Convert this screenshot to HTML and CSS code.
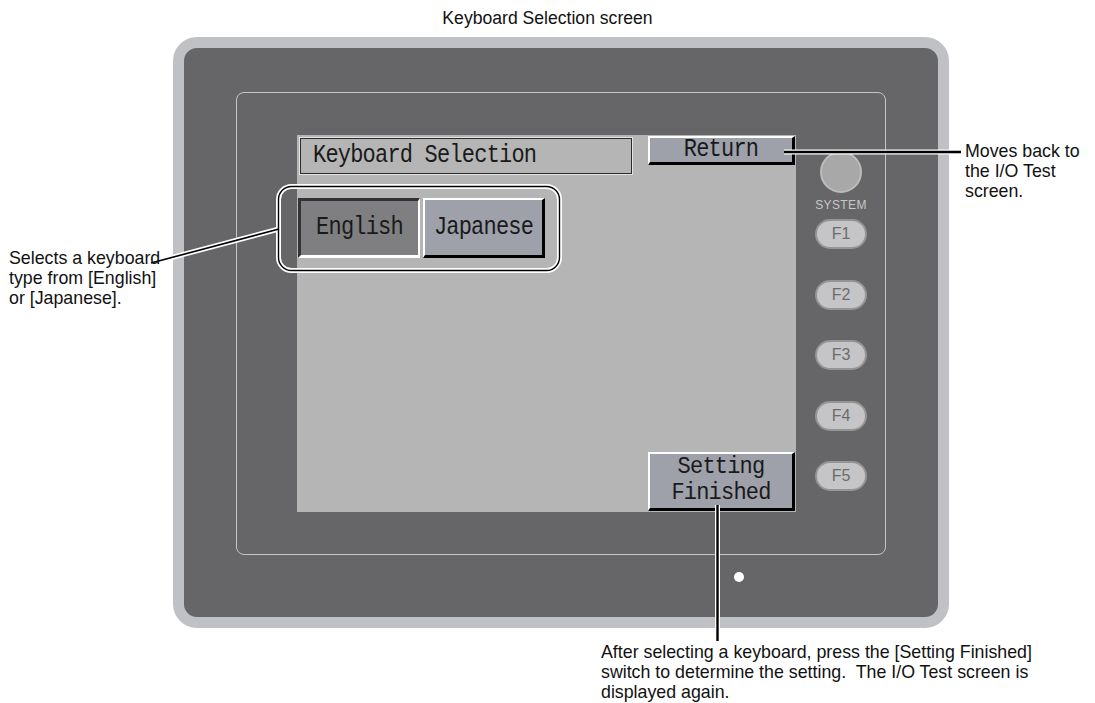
FILE: index.html
```html
<!DOCTYPE html>
<html lang="en">
<head>
    <meta charset="UTF-8">
    <title>Keyboard Selection screen</title>

    <link rel="stylesheet" href="styles.css">
</head>

<body>
<div class="page">
    <h1 class="caption">Keyboard Selection screen</h1>

    <div class="panel">
        <div class="bezel">
            <div class="screen">
                <div class="screen-top">
                    <div class="title-box lcd"><span>Keyboard Selection</span></div>
                    <div class="key raised lcd"><span>Return</span></div>
                </div>

                <div class="choice-row">
                    <div class="key choice pressed lcd"><span>English</span></div>
                    <div class="key choice raised lcd"><span>Japanese</span></div>
                </div>

                <div class="key finish raised lcd">
                    <span>Setting</span>
                    <span>Finished</span>
                </div>
            </div>

            <div class="side-keys">
                <div class="sys-btn"></div>
                <div class="sys-label">SYSTEM</div>
                <div class="fkey">F1</div>
                <div class="fkey">F2</div>
                <div class="fkey">F3</div>
                <div class="fkey">F4</div>
                <div class="fkey">F5</div>
            </div>
        </div>
        <div class="lamp"></div>
    </div>

    <svg class="leaders" width="1095" height="703" viewBox="0 0 1095 703">
        <g fill="none" stroke="#ffffff" stroke-width="5">
            <rect x="278.5" y="186.5" width="281" height="84" rx="13"/>
            <line x1="151" y1="263" x2="279" y2="229"/>
            <line x1="784" y1="152" x2="960" y2="152"/>
            <line x1="717.5" y1="505" x2="717.5" y2="641"/>
        </g>
        <g fill="none" stroke="#000000" stroke-width="2">
            <rect x="278.5" y="186.5" width="281" height="84" rx="13" stroke-width="1.4"/>
            <line x1="151" y1="263" x2="279" y2="229" stroke-width="1.6"/>
            <line x1="784" y1="152" x2="961" y2="152" stroke-width="2.4"/>
            <line x1="717.5" y1="505" x2="717.5" y2="641" stroke-width="2.4"/>
        </g>
    </svg>

    <div class="note note-left">Selects a keyboard<br>type from [English]<br>or [Japanese].</div>
    <div class="note note-right">Moves back to<br>the I/O Test<br>screen.</div>
    <div class="note note-bottom">After selecting a keyboard, press the [Setting Finished]<br>switch to determine the setting.&nbsp; The I/O Test screen is<br>displayed again.</div>
</div>
</body>
</html>
```

FILE: styles.css
```css
body {
    margin: 0;
    background-color: #ffffff;
    font-family: "Liberation Sans", Arial, Helvetica, sans-serif;
    color: #111111;
}

.page {
    position: relative;
    width: 1095px;
    height: 703px;
    overflow: hidden;
}

.caption {
    margin: 0;
    padding-top: 8px;
    font-size: 17.6px;
    font-weight: normal;
    line-height: 20px;
    text-align: center;
}

/* the operator panel */

.panel {
    box-sizing: border-box;
    width: 776px;
    height: 591px;
    margin: 9px 0 0 173px;
    padding: 44px 0 0 52px;
    border: 11px solid #c0c1c5;
    border-radius: 24px;
    background-color: #666567;
}

.bezel {
    box-sizing: border-box;
    display: flex;
    align-items: flex-start;
    width: 650px;
    height: 463px;
    padding: 42px 0 0 60px;
    border: 1px solid #c6c6c6;
    border-radius: 8px;
}

.lamp {
    width: 10px;
    height: 10px;
    margin: 17px 0 0 498px;
    border-radius: 50%;
    background-color: #ffffff;
}

/* touch screen */

.screen {
    box-sizing: border-box;
    display: flex;
    flex-direction: column;
    width: 499px;
    height: 377px;
    padding: 1px 1px 1px 0;
    background-color: #b5b5b5;
}

.lcd {
    font-family: "Liberation Mono", "DejaVu Sans Mono", monospace;
    font-size: 22px;
    letter-spacing: -0.8px;
    color: #1a1a1a;
}

/* the panel font is a tall, narrow bitmap face */
.lcd span {
    display: inline-block;
    line-height: 20px;
    transform: scaleY(1.17);
}

.screen-top {
    display: flex;
    justify-content: space-between;
    align-items: flex-start;
    padding-left: 3px;
}

.title-box {
    box-sizing: border-box;
    display: flex;
    align-items: center;
    width: 332px;
    height: 36px;
    margin-top: 2px;
    padding-left: 12px;
    border: 1px solid #2b2b2b;
    outline: 1px solid #e4e4e4;
}

.key {
    box-sizing: border-box;
    display: flex;
    align-items: center;
    justify-content: center;
    width: 147px;
    height: 29px;
    border-style: solid;
    border-width: 2px 3px 3px 2px;
    text-align: center;
}

.raised {
    background-color: #9ea0aa;
    border-color: #ffffff #000000 #000000 #ffffff;
}

.pressed {
    background-color: #7f7f81;
    border-color: #333333 #ffffff #ffffff #333333;
    border-width: 3px 2px 3px 3px;
}

.choice-row {
    display: flex;
    gap: 3px;
    margin-top: 24px;
    padding-left: 1px;
}

.choice {
    width: 122px;
    height: 60px;
}

.finish {
    flex-direction: column;
    gap: 6.5px;
    align-self: flex-end;
    height: 59px;
    margin-top: auto;
}

/* two lines stacked tightly, so stretch them a little less */
.finish span {
    transform: scaleY(1.06);
}

/* keys at the side of the screen */

.side-keys {
    display: flex;
    flex-direction: column;
    align-items: center;
    width: 52px;
    margin-left: 19px;
    padding-top: 16px;
}

.sys-btn {
    box-sizing: border-box;
    width: 42px;
    height: 42px;
    border: 2px solid #bcbcbc;
    border-radius: 50%;
    background-color: #a8a8a8;
}

.sys-label {
    margin-top: 5px;
    font-size: 12px;
    line-height: 14px;
    letter-spacing: 0.4px;
    color: #c8c8c8;
}

.fkey {
    box-sizing: border-box;
    display: flex;
    align-items: center;
    justify-content: center;
    width: 52px;
    height: 30px;
    margin-top: 30.5px;
    border: 2px solid #959595;
    border-radius: 15px;
    background-color: #c5c5c7;
    font-size: 16px;
    color: #6c6c6c;
}

.sys-label + .fkey {
    margin-top: 7px;
}

/* callouts */

.leaders {
    position: absolute;
    top: 0;
    left: 0;
    pointer-events: none;
}

.note {
    position: absolute;
    font-size: 17.8px;
    line-height: 20px;
    white-space: nowrap;
}

.note-left {
    top: 248px;
    left: 9px;
}

.note-right {
    top: 141px;
    left: 965px;
}

.note-bottom {
    top: 642px;
    left: 601px;
}
```
